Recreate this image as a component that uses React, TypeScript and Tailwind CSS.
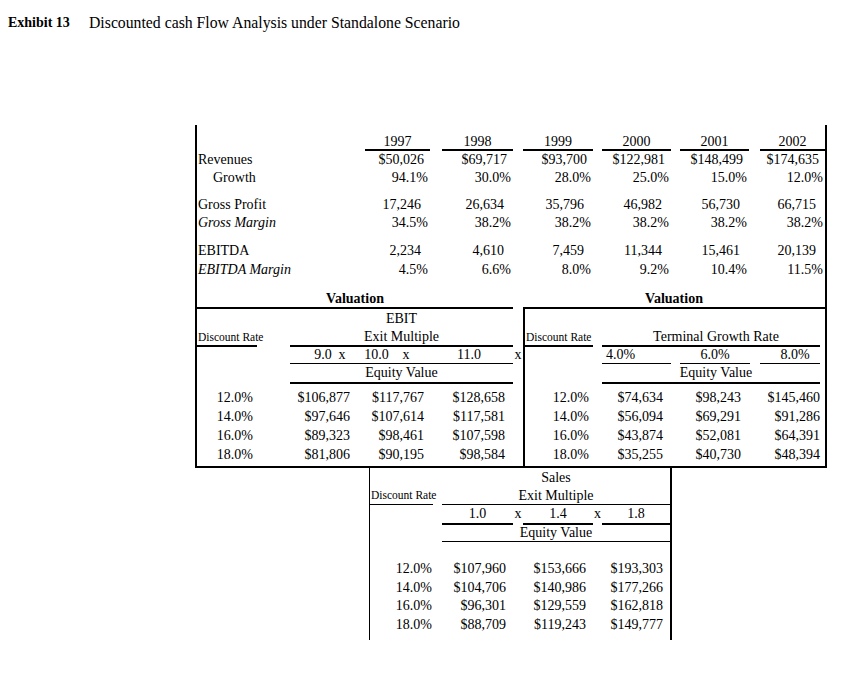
const COLS = [
  "w-[65px]",
  "ml-[12px] w-[71px]",
  "ml-[10px] w-[70px]",
  "ml-[9px] w-[69px]",
  "ml-[9px] w-[69px]",
  "ml-[11px] w-[65px]",
];

const years = ["1997", "1998", "1999", "2000", "2001", "2002"];

type RowProps = {
  label: string;
  values: string[];
  pad: string;
  rowClass: string;
  labelClass?: string;
};

function TopRow({ label, values, pad, rowClass, labelClass = "" }: RowProps) {
  return (
    <div className={`flex ${rowClass}`}>
      <div className={`w-[168px] whitespace-nowrap ${labelClass}`}>{label}</div>
      {values.map((v, i) => (
        <div key={i} className={`${COLS[i]} text-right ${pad}`}>
          {v}
        </div>
      ))}
    </div>
  );
}

const leftRows = [
  ["12.0%", "$106,877", "$117,767", "$128,658"],
  ["14.0%", "$97,646", "$107,614", "$117,581"],
  ["16.0%", "$89,323", "$98,461", "$107,598"],
  ["18.0%", "$81,806", "$90,195", "$98,584"],
];

const rightRows = [
  ["12.0%", "$74,634", "$98,243", "$145,460"],
  ["14.0%", "$56,094", "$69,291", "$91,286"],
  ["16.0%", "$43,874", "$52,081", "$64,391"],
  ["18.0%", "$35,255", "$40,730", "$48,394"],
];

const salesRows = [
  ["12.0%", "$107,960", "$153,666", "$193,303"],
  ["14.0%", "$104,706", "$140,986", "$177,266"],
  ["16.0%", "$96,301", "$129,559", "$162,818"],
  ["18.0%", "$88,709", "$119,243", "$149,777"],
];

export default function App() {
  return (
    <div className="min-h-[673px] w-[867px] bg-white text-black font-['Liberation_Serif','Times_New_Roman',serif] text-[14px]">
      {/* Title */}
      <div className="pt-[14px] pl-[8px] flex h-[32px] leading-[18px] whitespace-nowrap">
        <span className="w-[81px] font-bold text-[14px]">Exhibit 13</span>
        <span className="text-[15.75px]">Discounted cash Flow Analysis under Standalone Scenario</span>
      </div>

      {/* Main box */}
      <div className="ml-[195px] mt-[93px] w-[632px] border-x-2 border-b-2 border-black">
        <div className="h-[9px]" />
        {/* Years */}
        <div className="flex h-[17px]">
          <div className="w-[168px]" />
          {years.map((y, i) => (
            <div key={y} className={`${COLS[i]} h-[17px] border-b-2 border-black text-center leading-[15px]`}>
              {y}
            </div>
          ))}
        </div>
        <TopRow
          label="Revenues"
          values={["$50,026", "$69,717", "$93,700", "$122,981", "$148,499", "$174,635"]}
          pad="pr-[6px]"
          rowClass="h-[17px] leading-[17px]"
          labelClass="pl-[1px]"
        />
        <TopRow
          label="Growth"
          values={["94.1%", "30.0%", "28.0%", "25.0%", "15.0%", "12.0%"]}
          pad="pr-[2px]"
          rowClass="h-[19px] leading-[19px]"
          labelClass="pl-[16px]"
        />
        <div className="h-[8px]" />
        <TopRow
          label="Gross Profit"
          values={["17,246", "26,634", "35,796", "46,982", "56,730", "66,715"]}
          pad="pr-[9px]"
          rowClass="h-[19px] leading-[19px]"
          labelClass="pl-[1px]"
        />
        <TopRow
          label="Gross Margin"
          values={["34.5%", "38.2%", "38.2%", "38.2%", "38.2%", "38.2%"]}
          pad="pr-[2px]"
          rowClass="h-[18px] leading-[18px]"
          labelClass="pl-[1px] italic"
        />
        <div className="h-[9px]" />
        <TopRow
          label="EBITDA"
          values={["2,234", "4,610", "7,459", "11,344", "15,461", "20,139"]}
          pad="pr-[9px]"
          rowClass="h-[19px] leading-[19px]"
          labelClass="pl-[1px]"
        />
        <TopRow
          label="EBITDA Margin"
          values={["4.5%", "6.6%", "8.0%", "9.2%", "10.4%", "11.5%"]}
          pad="pr-[2px]"
          rowClass="h-[19px] leading-[19px]"
          labelClass="pl-[1px] italic"
        />
        <div className="h-[10px]" />

        {/* Valuation headers */}
        <div className="flex">
          <div className="w-[316px] h-[20px] border-b-2 border-black text-center font-bold leading-[19px]">
            Valuation
          </div>
          <div className="w-[10px]" />
          <div className="w-[302px] h-[20px] border-b-2 border-black text-center font-bold leading-[19px]">
            Valuation
          </div>
        </div>

        {/* Lower two tables */}
        <div className="flex">
          {/* Left: EBIT exit multiple */}
          <div className="w-[326px] pb-[2px]">
            <div className="flex h-[20px] leading-[20px]">
              <div className="w-[93px]" />
              <div className="w-[223px] text-center">EBIT</div>
            </div>
            <div className="flex">
              <div className="w-[60px] h-[18px] border-b-2 border-black pl-[1px] text-[11.5px] leading-[16px] whitespace-nowrap">
                Discount Rate
              </div>
              <div className="w-[33px]" />
              <div className="w-[223px] h-[18px] border-b-2 border-black text-center leading-[16px]">
                Exit Multiple
              </div>
            </div>
            <div className="flex">
              <div className="w-[93px]" />
              <div className="w-[223px] h-[17px] border-b border-black flex leading-[16px]">
                <div className="ml-[23px] w-[20px] text-center">9.0</div>
                <div className="w-[18px] text-center">x</div>
                <div className="w-[51px] text-center">10.0</div>
                <div className="w-[8px] text-center">x</div>
                <div className="ml-[15px] w-[88px] text-center">11.0</div>
              </div>
              <div className="w-[10px] text-center leading-[16px]">x</div>
            </div>
            <div className="flex">
              <div className="w-[93px]" />
              <div className="w-[223px] h-[20px] border-b-2 border-black text-center leading-[18px]">
                Equity Value
              </div>
            </div>
            <div className="h-[4px]" />
            {leftRows.map((r) => (
              <div key={r[0]} className="flex h-[19px] leading-[19px]">
                <div className="w-[56px] text-right">{r[0]}</div>
                <div className="w-[97px] text-right">{r[1]}</div>
                <div className="w-[74px] text-right">{r[2]}</div>
                <div className="w-[81px] text-right">{r[3]}</div>
              </div>
            ))}
          </div>

          {/* Right: Terminal growth */}
          <div className="w-[302px] border-l-2 border-black">
            <div className="h-[20px]" />
            <div className="flex">
              <div className="w-[68px] h-[18px] border-b-2 border-black pl-[1px] text-[11.5px] leading-[16px] whitespace-nowrap">
                Discount Rate
              </div>
              <div className="w-[9px]" />
              <div className="w-[218px] h-[18px] border-b-2 border-black text-center pl-[10px] leading-[16px]">
                Terminal Growth Rate
              </div>
            </div>
            <div className="flex">
              <div className="w-[77px]" />
              <div className="w-[69px] h-[17px] border-b border-black pl-[4px] leading-[16px]">4.0%</div>
              <div className="w-[9px]" />
              <div className="w-[70px] h-[17px] border-b border-black text-center leading-[16px]">6.0%</div>
              <div className="w-[10px]" />
              <div className="w-[60px] h-[17px] border-b border-black text-center pl-[10px] leading-[16px]">8.0%</div>
            </div>
            <div className="flex">
              <div className="w-[77px]" />
              <div className="w-[218px] h-[20px] border-b-2 border-black text-center pl-[10px] leading-[18px]">
                Equity Value
              </div>
            </div>
            <div className="h-[4px]" />
            {rightRows.map((r) => (
              <div key={r[0]} className="flex h-[19px] leading-[19px]">
                <div className="w-[64px] text-right">{r[0]}</div>
                <div className="w-[74px] text-right">{r[1]}</div>
                <div className="w-[78px] text-right">{r[2]}</div>
                <div className="w-[79px] text-right">{r[3]}</div>
              </div>
            ))}
          </div>
        </div>
      </div>

      {/* Sales exit multiple table */}
      <div className="ml-[369px] w-[303px] h-[172px] border-l border-r-2 border-black">
        <div className="h-[1px]" />
        <div className="flex h-[18px] leading-[18px]">
          <div className="w-[72px]" />
          <div className="w-[228px] text-center">Sales</div>
        </div>
        <div className="flex">
          <div className="w-[63px] h-[18px] border-b border-black pl-[1px] text-[11.5px] leading-[17px] whitespace-nowrap">
            Discount Rate
          </div>
          <div className="w-[9px]" />
          <div className="w-[228px] h-[18px] border-b border-black text-center leading-[17px]">Exit Multiple</div>
        </div>
        <div className="flex">
          <div className="w-[72px]" />
          <div className="w-[71px] h-[20px] border-b-2 border-black text-center leading-[18px]">1.0</div>
          <div className="w-[10px] h-[20px] text-center leading-[18px]">x</div>
          <div className="w-[70px] h-[20px] border-b-2 border-black text-center leading-[18px]">1.4</div>
          <div className="w-[9px] h-[20px] text-center leading-[18px]">x</div>
          <div className="w-[68px] h-[20px] border-b-2 border-black text-center leading-[18px]">1.8</div>
        </div>
        <div className="flex">
          <div className="w-[72px]" />
          <div className="w-[228px] h-[17px] border-b border-black text-center leading-[16px]">Equity Value</div>
        </div>
        <div className="h-[18px]" />
        {salesRows.map((r) => (
          <div key={r[0]} className="flex h-[18.5px] leading-[18.5px]">
            <div className="w-[62px] text-right">{r[0]}</div>
            <div className="w-[74px] text-right">{r[1]}</div>
            <div className="w-[80px] text-right">{r[2]}</div>
            <div className="w-[77px] text-right">{r[3]}</div>
          </div>
        ))}
      </div>
    </div>
  );
}
